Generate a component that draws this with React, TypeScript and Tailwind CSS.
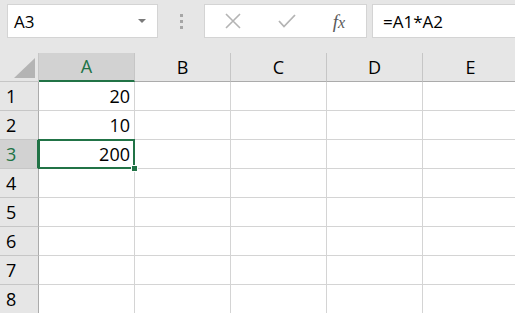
import React from 'react';

const cols = ['A', 'B', 'C', 'D', 'E'];
const rows = [1, 2, 3, 4, 5, 6, 7, 8];
const values: Record<number, string> = { 1: '20', 2: '10', 3: '200' };

const App = () => {
  return (
    <div className="w-[515px] h-[313px] overflow-hidden bg-[#e6e6e6] font-['Open_Sans',sans-serif] text-black">
      {/* formula bar */}
      <div className="flex h-[53px] pt-[4px]">
        <div className="ml-[7px] w-[151px] h-[34px] bg-white border border-[#d4d4d4] flex items-center justify-between pl-[6px] pr-[11px]">
          <span className="text-[17px] leading-none">A3</span>
          <svg width="8" height="5" viewBox="0 0 8 5">
            <path d="M0 0 L8 0 L4 4 Z" fill="#7a7a7a" />
          </svg>
        </div>
        <div className="w-[46px] h-[34px] flex items-center justify-center">
          <div className="flex flex-col gap-[3px]">
            <div className="w-[3px] h-[3px] bg-[#a6a6a6]" />
            <div className="w-[3px] h-[3px] bg-[#a6a6a6]" />
            <div className="w-[3px] h-[3px] bg-[#a6a6a6]" />
          </div>
        </div>
        <div className="w-[163px] h-[34px] bg-white border border-[#d4d4d4] flex items-center">
          <div className="w-[56px] flex justify-center">
            <svg width="16" height="16" viewBox="0 0 16 16">
              <path d="M1 1 L15 15 M15 1 L1 15" stroke="#b4b4b4" strokeWidth="1.6" />
            </svg>
          </div>
          <div className="w-[52px] flex justify-center">
            <svg width="18" height="14" viewBox="0 0 18 14">
              <path d="M1 7 L6 12.5 L17 1" stroke="#b4b4b4" strokeWidth="1.8" fill="none" />
            </svg>
          </div>
          <div className="w-[52px] flex justify-center">
            <span className="font-['Liberation_Serif',serif] italic text-[19px] leading-none text-[#5a5a5a]">
              f<span className="text-[16px]">x</span>
            </span>
          </div>
        </div>
        <div className="ml-[5px] flex-1 h-[34px] bg-white border border-[#d4d4d4] border-r-0 flex items-center pl-[10px]">
          <span className="text-[17px] leading-none">=A1*A2</span>
        </div>
      </div>

      {/* sheet */}
      <div className="grid grid-cols-[39px_96px_96px_96px_96px_96px] grid-rows-[29px_repeat(8,29px)] bg-white">
        <div className="relative bg-[#e6e6e6] border-r border-b border-[#c6c6c6]">
          <svg className="absolute right-[3px] bottom-[3px]" width="21" height="20" viewBox="0 0 21 20">
            <path d="M21 0 L21 20 L0 20 Z" fill="#b4b4b4" />
          </svg>
        </div>
        {cols.map((c) => (
          <div
            key={c}
            className={
              c === 'A'
                ? 'bg-[#d2d2d2] border-r border-[#c6c6c6] border-b-2 border-b-[#217346] flex items-center justify-center text-[18px] text-[#217346]'
                : 'bg-[#e6e6e6] border-r border-[#c6c6c6] border-b border-b-[#ababab] flex items-center justify-center text-[18px]'
            }
          >
            {c}
          </div>
        ))}
        {rows.map((r) => (
          <React.Fragment key={r}>
            <div
              className={
                r === 3
                  ? 'bg-[#d2d2d2] border-r-2 border-r-[#217346] border-b border-b-[#c6c6c6] flex items-center pl-[6px] text-[18px] text-[#217346]'
                  : 'bg-[#e6e6e6] border-r border-r-[#ababab] border-b border-b-[#c6c6c6] flex items-center pl-[6px] text-[18px]'
              }
            >
              {r}
            </div>
            {cols.map((c) => (
              <div
                key={c}
                className={
                  c === 'A' && r === 3
                    ? 'relative z-10 border-r border-b border-[#d4d4d4] flex items-center justify-end pr-[4px] text-[18px]'
                    : 'relative border-r border-b border-[#d4d4d4] flex items-center justify-end pr-[4px] text-[18px]'
                }
              >
                {c === 'A' && values[r]}
                {c === 'A' && r === 3 && (
                  <>
                    <div className="absolute -left-[1px] -top-[1px] -right-[1px] -bottom-[1px] border-2 border-[#217346]" />
                    <div className="absolute -right-[4px] -bottom-[4px] w-[7px] h-[7px] bg-[#217346] border border-white" />
                  </>
                )}
              </div>
            ))}
          </React.Fragment>
        ))}
      </div>
    </div>
  );
};

export default App;
